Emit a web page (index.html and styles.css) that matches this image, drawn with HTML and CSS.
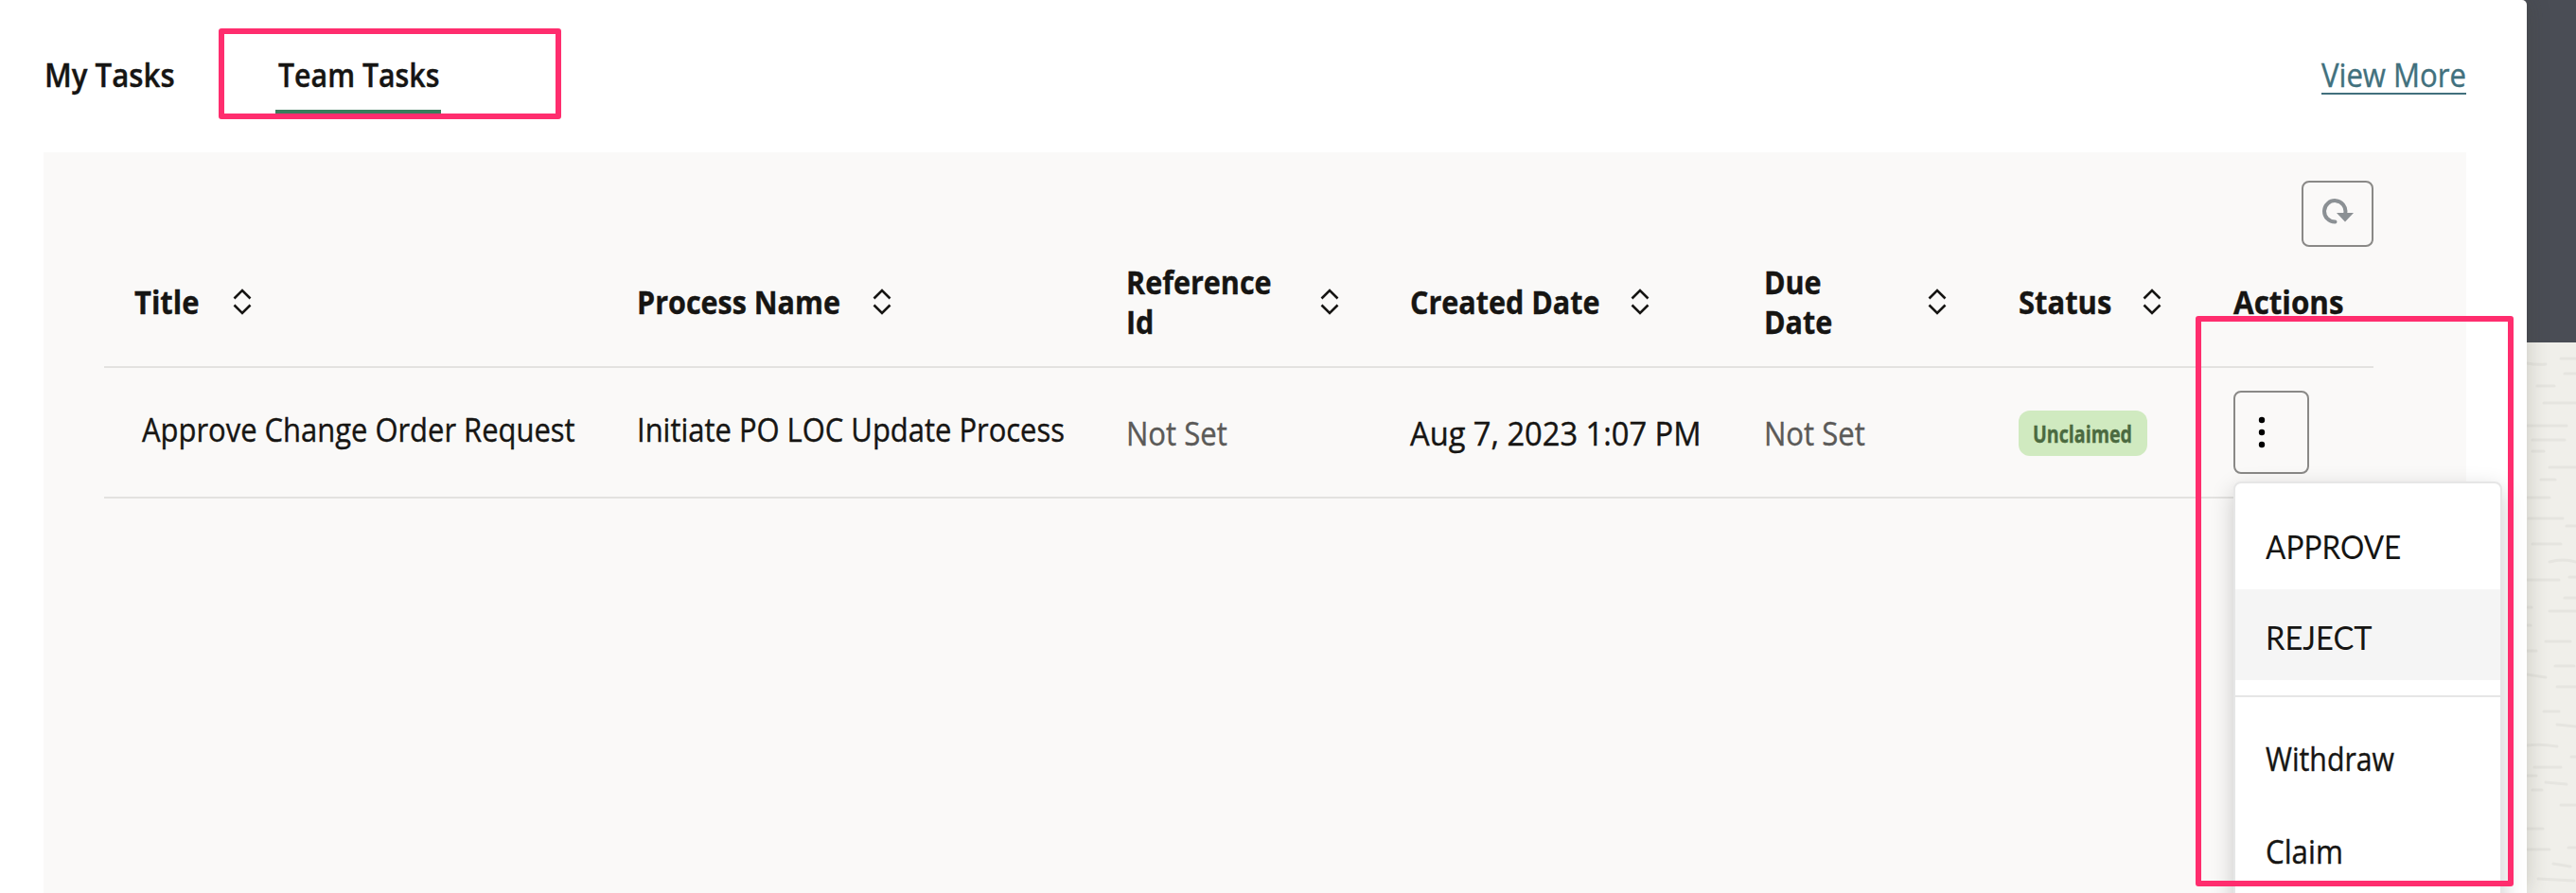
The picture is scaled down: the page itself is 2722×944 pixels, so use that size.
FILE: index.html
```html
<!DOCTYPE html>
<html lang="en">
<head>
<meta charset="utf-8">
<title>Team Tasks</title>
<link rel="stylesheet" href="styles.css">
</head>
<body>
<svg width="0" height="0" class="defs"><defs>
  <symbol id="sort" viewBox="0 0 20 28"><path d="M1.5 10.5 10 2l8.500 8.500M1.500 17.500 10 26l8.500-8.500" fill="none" stroke="#161513" stroke-width="2.600"/></symbol>
</defs></svg>
<div class="page">
  <main class="card">
    <header class="top">
      <nav class="tabs">
        <a class="tab my"><span class="fit k-my">My Tasks</span></a>
        <a class="tab team"><span class="fit k-team">Team Tasks</span></a>
      </nav>
      <a class="more"><span class="fit k-more">View More</span></a>
    </header>
    <section class="panel">
      <div class="tools">
        <button class="refresh" aria-label="Refresh"><svg width="34" height="28" viewBox="0 0 34 28"><path d="M14.500 24.500A11.200 11.200 0 1 1 25.300 15" fill="none" stroke="#8b9094" stroke-width="4" stroke-linecap="round"/><path d="M16 15h18l-9 9.500z" fill="#8b9094"/></svg></button>
      </div>
      <div class="row head">
        <div class="cell"><span class="lbl w-title"><span class="fit k-title">Title</span></span><svg class="sort"><use href="#sort"/></svg></div>
        <div class="cell"><span class="lbl w-proc"><span class="fit k-b">Process Name</span></span><svg class="sort"><use href="#sort"/></svg></div>
        <div class="cell"><span class="lbl w-ref"><span class="fit k-b">Reference<br>Id</span></span><svg class="sort"><use href="#sort"/></svg></div>
        <div class="cell"><span class="lbl w-created"><span class="fit k-b">Created Date</span></span><svg class="sort"><use href="#sort"/></svg></div>
        <div class="cell"><span class="lbl w-due"><span class="fit k-b">Due<br>Date</span></span><svg class="sort"><use href="#sort"/></svg></div>
        <div class="cell"><span class="lbl w-status"><span class="fit k-title">Status</span></span><svg class="sort"><use href="#sort"/></svg></div>
        <div class="cell"><span class="lbl"><span class="fit k-act">Actions</span></span></div>
      </div>
      <div class="row body">
        <div class="cell raised indent"><span class="fit k-n">Approve Change Order Request</span></div>
        <div class="cell raised"><span class="fit k-n">Initiate PO LOC Update Process</span></div>
        <div class="cell muted"><span class="fit k-not">Not Set</span></div>
        <div class="cell"><span class="fit k-aug">Aug 7, 2023 1:07 PM</span></div>
        <div class="cell muted"><span class="fit k-not">Not Set</span></div>
        <div class="cell"><span class="badge"><span class="fit k-badge">Unclaimed</span></span></div>
        <div class="cell"><button class="dots" aria-label="Actions"><svg width="8" height="34" viewBox="0 0 8 34"><circle cx="4" cy="4" r="3.200"/><circle cx="4" cy="17" r="3.200"/><circle cx="4" cy="30" r="3.200"/></svg></button></div>
      </div>
    </section>
  </main>
  <aside class="side">
    <div class="banner"></div>
    <div class="texture"><svg width="52" height="582" viewBox="0 0 52 582"><path d="M0 22q10 2 20 1M36 17h16M40 33h12M11 46h18M18 64h34M0 88h42M6 103h34M6 115h12M24 132h28M15 145h15M0 164h24M2 186h36M42 194h10M6 213h30M24 232q14-4 28 0M45 248h7M0 251h34M40 270h12M0 280h5M24 284h28M0 299h4M20 316h26M0 326h10M30 342h20M0 351l20 3M32 364h20M18 390h16M32 404l20 2M0 426q14-2 32 1M47 438h5M8 449h28M0 458h10M20 465l22 2M6 473h10M36 489h16M0 514h17M0 536h24M44 534h8M28 551l18 3M12 567l38 2"/></svg></div>
  </aside>
</div>
<div class="menu">
  <div class="item"><span class="fit k-app">APPROVE</span></div>
  <div class="item on"><span class="fit k-rej">REJECT</span></div>
  <div class="sep"></div>
  <div class="item wd"><span class="fit k-wd">Withdraw</span></div>
  <div class="item cl"><span class="fit k-cl">Claim</span></div>
</div>
<div class="mark mark-tab"></div>
<div class="mark mark-menu"></div>
</body>
</html>
```
FILE: styles.css
```css
* { box-sizing: border-box; }
html, body { margin: 0; height: 944px; overflow: hidden; }
body { font: 34px/42px "Open Sans", "Noto Sans", sans-serif; color: #161513; background: #f1efeb; }
.defs { display: block; position: absolute; }
button { padding: 0; background: transparent; }

/* Labels are drawn in a slightly condensed width */
.fit { display: inline-block; white-space: nowrap; transform: scaleX(var(--k)); transform-origin: 0 50%; -webkit-text-stroke: .4px currentColor; }
.k-my { --k: .918; font-weight: 600; }
.k-team { --k: .891; font-weight: 600; }
.k-more { --k: .915; }
.k-b { --k: .897; }
.k-title { --k: .91; }
.k-act { --k: .922; }
.k-n { --k: .91; }
.k-not { --k: .913; }
.k-aug { --k: .96; }
.k-badge { --k: .785; }
.k-app { --k: .93; font-family: Lato, sans-serif; -webkit-text-stroke: 0; }
.k-rej { --k: .96; font-family: Lato, sans-serif; -webkit-text-stroke: 0; }
.k-wd { --k: .89; }
.k-cl { --k: .92; }

.page { display: flex; height: 944px; background: #4a4d55; }
.card { width: 2670px; background: #fff; padding: 0 64px 0 46px; border-radius: 0 5px 0 0; display: flex; flex-direction: column; box-shadow: 0 0 24px rgba(60,60,40,.22); z-index: 1; }
.top { height: 161px; display: flex; justify-content: space-between; padding-top: 58px; flex: none; }
.tabs { display: flex; }
.tab { height: 64px; }
.my { width: 245px; padding-left: 1px; }
.team { width: 175px; padding-left: 3px; border-bottom: 6px solid #3a7d5c; }
.more { width: 153px; height: 42px; color: #41707d; border-bottom: 2px solid #41707d; white-space: nowrap; }

.panel { flex: 1; background: #faf9f8; padding: 30px 98px 0 64px; }
.tools { display: flex; justify-content: flex-end; }
.refresh { width: 76px; height: 70px; border: 2px solid #8a8987; border-radius: 8px; padding: 0 0 5px 0; display: flex; align-items: center; justify-content: center; }
.row { display: grid; grid-template-columns: 531px 517px 300px 374px 269px 227px 180px; border-bottom: 2px solid #e3e2e0; }
.head { height: 128px; padding: 16px 0 26px; align-items: center; font-weight: 700; }
.cell { padding-left: 32px; display: flex; align-items: center; }
.lbl { flex: none; }
.w-title { width: 104px; }
.w-proc { width: 249px; }
.w-ref { width: 205px; }
.w-created { width: 233px; }
.w-due { width: 173px; }
.w-status { width: 131px; }
.sort { width: 20px; height: 28px; }
.body { height: 138px; align-items: start; padding-top: 47px; }
.body .cell { height: 44px; }
.body .raised { margin-top: -4px; }
.body .indent { padding-left: 40px; }
.muted { color: #5b5a58; }
.badge { flex: none; width: 136px; height: 48px; padding-left: 15px; border-radius: 12px; background: #d0eac0; color: #4b6a40; font-size: 25px; font-weight: 700; line-height: 48px; }
.dots { flex: none; width: 80px; height: 88px; border: 2px solid #8a8987; border-radius: 8px; padding-left: 24px; display: flex; align-items: center; margin-top: -2px; }

.side { flex: 1; }
.banner { height: 362px; background: #4a4d55; }
.texture { height: 582px; background: #f0efea; overflow: hidden; }
.texture svg { display: block; }
.texture path { fill: none; stroke: #e6e5e0; stroke-width: 3; stroke-linecap: round; }

.menu { position: absolute; left: 2360px; top: 509px; width: 284px; height: 460px; background: #fff; border: 2px solid #e6e6e6; border-radius: 8px; padding-top: 16px; box-shadow: 0 8px 24px rgba(0,0,0,.2); z-index: 2; }
.item { height: 96px; padding: 30px 0 0 32px; }
.on { background: #f5f5f5; }
.sep { height: 18px; border-bottom: 2px solid #e6e6e6; }
.wd { padding-top: 44px; }
.cl { padding-top: 46px; }

/* Callout frames */
.mark { position: absolute; border: 6px solid #ff2d6e; border-radius: 3px; z-index: 3; }
.mark-tab { left: 231px; top: 30px; width: 362px; height: 96px; }
.mark-menu { left: 2320px; top: 334px; width: 336px; height: 603px; }
```
